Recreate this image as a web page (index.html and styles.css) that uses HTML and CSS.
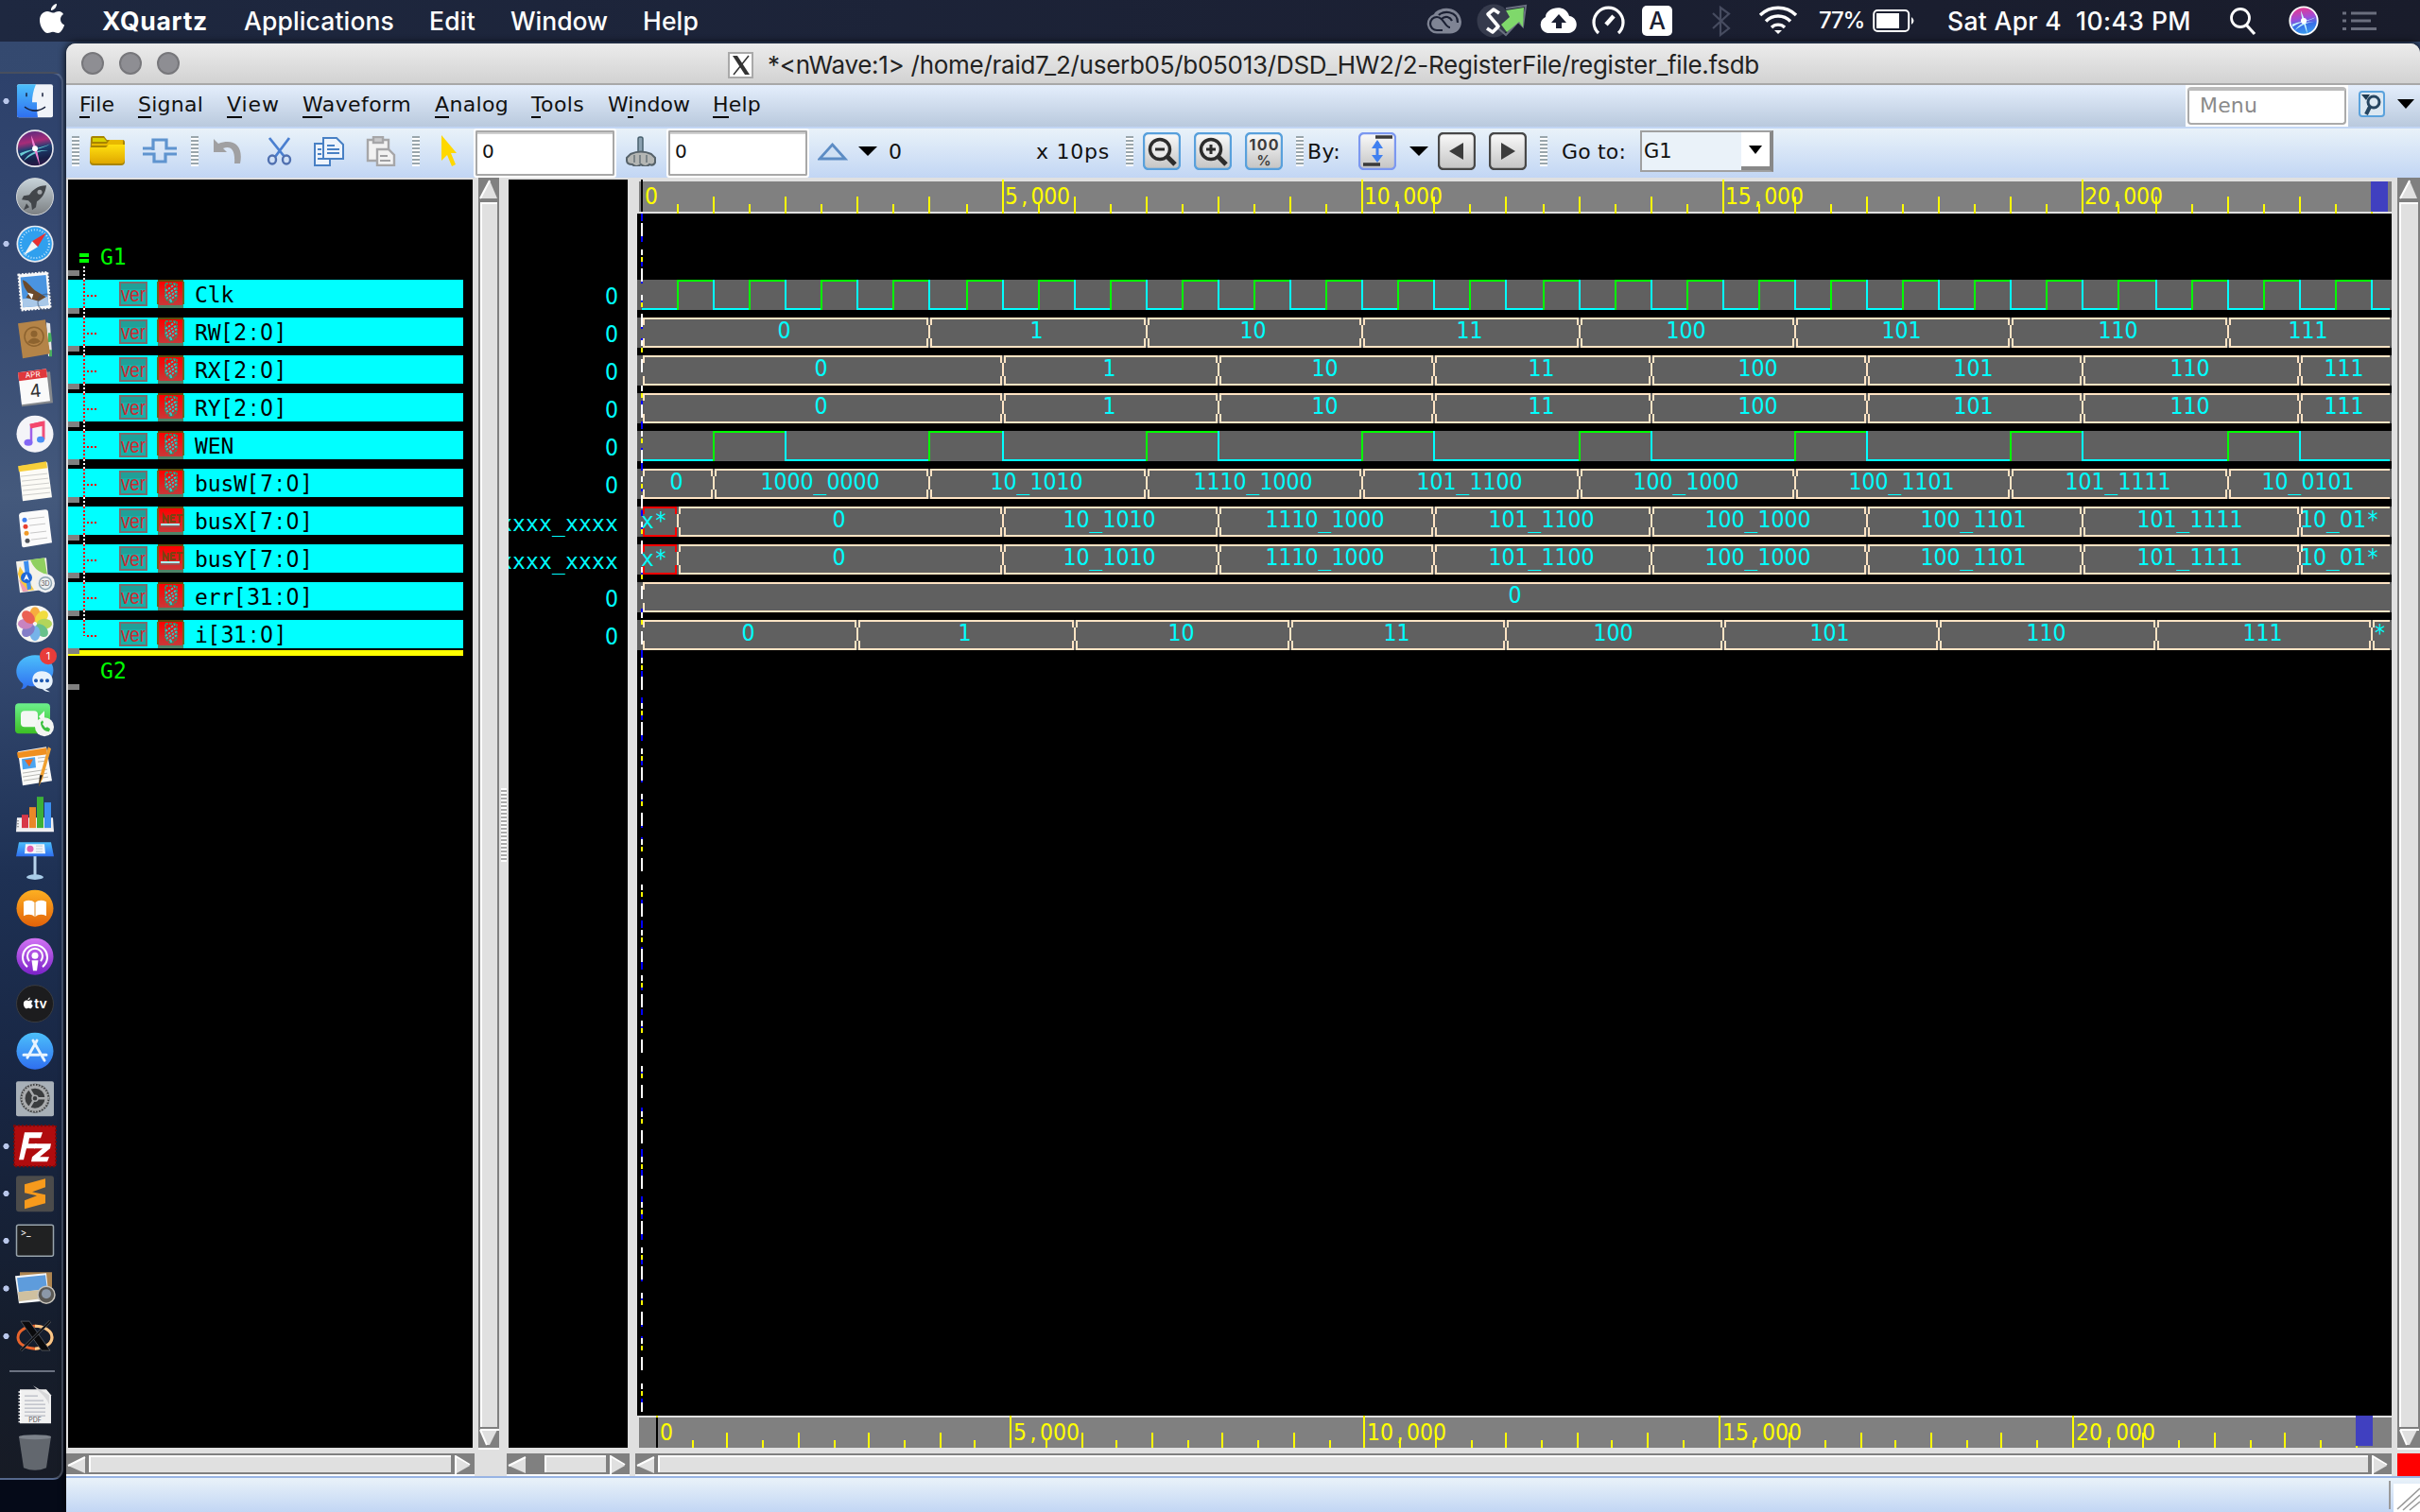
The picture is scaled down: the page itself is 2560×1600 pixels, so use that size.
FILE: index.html
```html
<!DOCTYPE html>
<html lang="en">
<head>
<meta charset="utf-8">
<title>nWave</title>
<link rel="stylesheet" href="styles.css">
</head>
<body>
<header class="menubar">
  <svg class="apple" width="28" height="34" viewBox="0 0 28 34"><path fill="#fff" d="M19 1c.3 3-2.700 7-6 7-.4-3.200 2.800-6.500 6-7zM26 12c-4.500 2.800-3.800 9.500 1.200 11.500-1.200 3.500-4 8.500-6.700 8.500-2.200 0-3-1.300-5.500-1.300S11.500 32 9.300 32C5.500 32 1 24.500 1 18.500 1 12.500 5 9 9 9c2.500 0 4.200 1.600 6 1.600 1.700 0 3.700-1.700 6.500-1.700 2 0 3.700 1.300 4.500 3.100z"/></svg>
  <b class="mb" data-w="112">XQuartz</b>
  <span class="mb mb-app" data-w="159">Applications</span>
  <span class="mb mb-edit" data-w="49">Edit</span>
  <span class="mb mb-win" data-w="103">Window</span>
  <span class="mb mb-help" data-w="59">Help</span>
  <div class="status">
    <svg width="40" height="44" viewBox="0 0 40 44"><path d="M12 35.500a10.500 10.500 0 0 1-3-20.500C12 7 36 4 38 23c0 7-5 12.500-12 12.500z" fill="#7f8494"/><g fill="none" stroke="#1b2033" stroke-width="2.200"><path d="M18 32h-6a7 7 0 0 1 0-14c4 0 6 3 8 6s4 5 6 5"/><path d="M14 16c4-5 20-5 20 8"/><path d="M17 20c4-4 9-2 11 2"/></g></svg>
    <svg class="sb-s" width="54" height="44" viewBox="0 0 54 44"><circle cx="18" cy="22" r="17.500" fill="#363b4d"/><path d="M31 9l21-3-3 22-5-5-13 14-8-7-4 3" fill="none" stroke="#6a7080" stroke-width="2"/><path d="M24 14l-6-4-6 5 11 13-6 6-6-4" fill="none" stroke="#fff" stroke-width="3.600" stroke-linejoin="round"/><path d="M31 11l19-3-1 21-4-6-13 11-6-8 9-8z" fill="#7fd86b"/></svg>
    <svg class="sb-c" width="42" height="44" viewBox="0 0 42 44"><path d="M9 35a9 9 0 0 1-2-17C7 8 28 3 32 17c10 1 11 17-1 18z" fill="#fff"/><path d="M21 15l8 9h-5v6h-6v-6h-5z" fill="#1b2033"/></svg>
    <svg class="sb-g" width="38" height="44" viewBox="0 0 38 44"><path d="M8 35a15.500 15.500 0 1 1 21 0" fill="none" stroke="#fff" stroke-width="3.200"/><path d="M16 26l8-9" stroke="#fff" stroke-width="4.500"/></svg>
    <span class="input-src">A</span>
    <svg class="sb-b" width="22" height="44" viewBox="0 0 22 44"><path d="M2 14l17 16-9 7V8l9 6.500L2 30" fill="none" stroke="#474c60" stroke-width="2.200"/></svg>
    <svg class="sb-w" width="42" height="44" viewBox="0 0 42 44"><g fill="none" stroke="#fff" stroke-width="3.400"><path d="M2 16a27 27 0 0 1 38 0M8 22.500a18 18 0 0 1 26 0M14 29a10 10 0 0 1 14 0"/></g><path d="M17 32h8l-4 4z" fill="#fff"/></svg>
    <span class="pct" data-w="48">77%</span>
    <svg class="sb-bat" width="46" height="44" viewBox="0 0 46 44"><rect x="1.200" y="11" width="37" height="22" rx="4" fill="none" stroke="#fff" stroke-width="2"/><rect x="4" y="14" width="24" height="16" fill="#fff"/><path d="M41 18q5 4 0 8z" fill="#fff"/></svg>
    <span class="date" data-w="121">Sat Apr 4</span>
    <span class="time" data-w="122">10:43 PM</span>
    <svg class="sb-f" width="30" height="44" viewBox="0 0 30 44"><circle cx="12" cy="19" r="9.500" fill="none" stroke="#fff" stroke-width="2.800"/><path d="M18 26l9 10" stroke="#fff" stroke-width="3.200"/></svg>
    <svg class="sb-siri" width="34" height="44" viewBox="0 0 44 50"><circle cx="22" cy="25" r="19" fill="url(#gSiriBar)" stroke="#fff" stroke-width="2.400"/><path d="M6 30c8-4 22-5 32-10C30 26 20 24 7 33zM18 11c4 8 8 20 9 32-4-12-8-20-9-32zM10 38c6-9 14-12 26-11-10 0-17 4-26 11z" fill="#c8fcff"/><circle cx="22" cy="25" r="4" fill="#fff"/></svg>
    <svg class="sb-l" width="38" height="44" viewBox="0 0 38 44"><path d="M0 14h4M0 22h4M0 30.500h4M9 14h27M9 22h21M9 30.500h27" stroke="#6b6f7e" stroke-width="3"/></svg>
  </div>
</header>

<svg class="defs" width="0" height="0">
  <defs>
    <linearGradient id="gBlue" x2="0" y2="1"><stop stop-color="#4cc0fb"/><stop offset="1" stop-color="#2f6ff0"/></linearGradient>
    <linearGradient id="gSiri" x1=".4" x2=".6" y2="1"><stop stop-color="#5a2a80"/><stop offset=".3" stop-color="#a82c78"/><stop offset=".5" stop-color="#1d3f72"/><stop offset=".8" stop-color="#182048"/><stop offset="1" stop-color="#301848"/></linearGradient>
    <linearGradient id="gSiriBar" x1=".4" x2=".6" y2="1"><stop stop-color="#e8388c"/><stop offset=".4" stop-color="#a04cd8"/><stop offset=".65" stop-color="#3870e8"/><stop offset="1" stop-color="#38a0f0"/></linearGradient>
    <linearGradient id="gGrey" x2="0" y2="1"><stop stop-color="#c8d4da"/><stop offset="1" stop-color="#7b7f82"/></linearGradient>
    <linearGradient id="gGreen" x2="0" y2="1"><stop stop-color="#6cf08c"/><stop offset="1" stop-color="#3cc024"/></linearGradient>
    <linearGradient id="gOrange" x2="0" y2="1"><stop stop-color="#fdb022"/><stop offset="1" stop-color="#e2620a"/></linearGradient>
    <linearGradient id="gPurple" x2="0" y2="1"><stop stop-color="#d273f4"/><stop offset="1" stop-color="#7a22c8"/></linearGradient>
    <linearGradient id="gRed" x2="0" y2="1"><stop stop-color="#ff0000"/><stop offset="1" stop-color="#c83838"/></linearGradient>
    <linearGradient id="gBtn" x2="0" y2="1"><stop stop-color="#fafafa"/><stop offset="1" stop-color="#c4c4c4"/></linearGradient>
    <linearGradient id="gGold" x2="0" y2="1"><stop stop-color="#ffe010"/><stop offset="1" stop-color="#e0a800"/></linearGradient>
    <g id="siri"><circle cx="22" cy="25" r="19" fill="url(#gSiri)" stroke="#e8e8ee" stroke-width="1.600"/><path d="M6 30c8-4 22-5 32-10C30 26 20 24 7 33zM10 38c6-9 14-12 26-11-10 0-17 4-26 11z" fill="#7ff4f0" opacity=".8"/><path d="M18 11c4 8 8 20 9 32-4-12-8-20-9-32z" fill="#f080d0"/><circle cx="22" cy="25" r="3" fill="#fff"/></g>
  </defs>
</svg>

<main class="desktop">
  <nav class="dock">
    <svg class="app run" viewBox="0 0 44 50"><rect x="3" y="7" width="38" height="35" rx="2" fill="#f0f3f9"/><path d="M3 9q0-2 2-2h18c-3 7-4 13-4 19h5c0 6 0 10 1 16H5q-2 0-2-2z" fill="url(#gBlue)"/><path d="M13 16v4M30 16v4M11 31q11 8 22 0" stroke="#17203c" stroke-width="1.500" fill="none"/></svg>
    <svg class="app" viewBox="0 0 44 50"><use href="#siri"/></svg>
    <svg class="app" viewBox="0 0 44 50"><circle cx="22" cy="25" r="19.500" fill="url(#gGrey)" stroke="#d5d9dc"/><path d="M34 13c-9 0-15 5-18 10l-6 1-2 4 7 1 3 3 1 7 4-3 1-6c6-4 9-9 10-17zM13 32l-3 7 6-3z" fill="#42464a"/><circle cx="27" cy="20" r="2.500" fill="#a0a4a8"/></svg>
    <svg class="app run" viewBox="0 0 44 50"><circle cx="22" cy="25" r="19.500" fill="#e8eaee"/><circle cx="22" cy="25" r="17.800" fill="#30a0ee"/><circle cx="22" cy="25" r="15" fill="none" stroke="#c0e4fa" stroke-width="2" stroke-dasharray="1 2"/><path d="M34 13L19 22l6 6z" fill="#e83030"/><path d="M10 37l9-15 6 6z" fill="#f4f4f4"/></svg>
    <svg class="app" viewBox="0 0 44 50"><g transform="rotate(-5 22 25)"><rect x="6" y="6" width="31" height="38" fill="#f8f8f8" stroke="#f8f8f8" stroke-width="2" stroke-dasharray="2 1.500"/><rect x="8" y="9" width="27" height="32" fill="#4a94e0"/><path d="M8 32h27v9H8z" fill="#a9c8e8"/><path d="M10 12c5 2 8 8 12 12l11 8-8 4-13-5 3-4c-3-5-5-9-5-15z" fill="#6b4a2c"/><path d="M14 26l6 2-2 5z" fill="#fff"/></g><circle cx="34" cy="37" r="9" fill="none" stroke="#3c4c66" stroke-width="1.500" opacity=".5"/></svg>
    <svg class="app" viewBox="0 0 44 50"><path d="M34 8l4 1 2 33-4 2z" fill="#e8e8e8"/><path d="M36 19l3 0 1 9-4 1zM37 37h3v7h-3z" fill="#48b060"/><path d="M4 9l29-4 5 36-29 5z" fill="#b48448"/><circle cx="21" cy="23" r="10" fill="none" stroke="#8d632f" stroke-width="1.500"/><circle cx="21" cy="20" r="3.500" fill="#8d632f"/><path d="M14 29q7-8 14-1-6 5-14 1z" fill="#8d632f"/></svg>
    <svg class="app" viewBox="0 0 44 50"><path d="M6 13l32-4 3 33-33 4z" fill="#85888c"/><path d="M4 10l30-4 4 34-30 4z" fill="#fafafa"/><path d="M4 10l30-4 1 9-30 4z" fill="#e0383c"/><g transform="rotate(-6 22 25)"><text x="21" y="15" font-size="8" class="ico" fill="#fff">APR</text><text x="22" y="36" font-size="19" class="ico" fill="#333">4</text></g></svg>
    <svg class="app" viewBox="0 0 44 50"><circle cx="22" cy="25" r="19.500" fill="#f4f4f8"/><path d="M17 16l14-3v18" fill="none" stroke="#f0507a" stroke-width="3"/><path d="M18 15v19" stroke="#a060e8" stroke-width="2.500"/><path d="M17 17l14-3" stroke="#f4486c" stroke-width="5"/><ellipse cx="15" cy="34" rx="4.500" ry="3.500" fill="#8468f4"/><ellipse cx="28" cy="31" rx="4" ry="3.300" fill="#4a90f4"/></svg>
    <svg class="app" viewBox="0 0 44 50"><path d="M5 9l30-4 5 37-31 4z" fill="#fcfbf6"/><path d="M4 9l30-5 1 7-30 4z" fill="#f7cf3a"/><path d="M7 20l28-3M8 25l28-3M8 30l29-3M9 35l29-3M9 40l29-3" stroke="#cfcfcc"/></svg>
    <svg class="app" viewBox="0 0 44 50"><path d="M8 8l25-3q3 0 3 3l4 32-30 5q-2 0-2-3L5 11q0-2 3-3z" fill="#fbfbfb"/><g stroke="#c8c8c8"><path d="M15 15l17-2M16 22l17-2M17 30l17-2M18 37l17-2"/></g><circle cx="11" cy="16" r="2.500" fill="#4080f0"/><circle cx="12" cy="23" r="2.500" fill="#e84030"/><circle cx="13" cy="30" r="2.500" fill="#f09a28"/><circle cx="14" cy="38" r="2.500" fill="#50545c"/></svg>
    <svg class="app" viewBox="0 0 44 50"><path d="M2 9l32-4 3 33-31 4z" fill="#f4f2ea"/><path d="M17 7l15-2 3 18c-10-3-15-8-18-16z" fill="#90d060"/><path d="M4 22l6 18 11-1L6 14z" fill="#f7c83a"/><path d="M5 28l4 13 6-1z" fill="#f09ab0"/><path d="M10 9l5-1 3 30-4 1z" fill="#3c8ef0"/><circle cx="13" cy="26" r="6" fill="#1e68d8"/><path d="M13 22l3 7-3-2-3 2z" fill="#fff"/><circle cx="33" cy="32" r="10" fill="#eef0f2"/><circle cx="33" cy="32" r="6.500" fill="none" stroke="#8ba2b0" stroke-width="1.500"/><text x="33" y="35" font-size="7" class="ico" fill="#555">3D</text></svg>
    <svg class="app" viewBox="0 0 44 50"><circle cx="22" cy="25" r="19.500" fill="#f6f6f2"/><g opacity=".85"><ellipse cx="22" cy="15" rx="5.500" ry="8" fill="#f8a020"/><ellipse cx="22" cy="15" rx="5.500" ry="8" fill="#f0d820" transform="rotate(45 22 25)"/><ellipse cx="22" cy="15" rx="5.500" ry="8" fill="#a8d040" transform="rotate(90 22 25)"/><ellipse cx="22" cy="15" rx="5.500" ry="8" fill="#50b878" transform="rotate(135 22 25)"/><ellipse cx="22" cy="15" rx="5.500" ry="8" fill="#60a8e8" transform="rotate(180 22 25)"/><ellipse cx="22" cy="15" rx="5.500" ry="8" fill="#7068c0" transform="rotate(225 22 25)"/><ellipse cx="22" cy="15" rx="5.500" ry="8" fill="#c070b8" transform="rotate(270 22 25)"/><ellipse cx="22" cy="15" rx="5.500" ry="8" fill="#e84838" transform="rotate(315 22 25)"/></g></svg>
    <svg class="app" viewBox="0 0 44 50"><path d="M22 8c26 0 26 32 0 33-4 0-6 0-8-1-2 3-4 4-7 4 2-2 3-4 2-6C-4 28 3 8 22 8z" fill="url(#gBlue)"/><path d="M29 25c15 0 15 18 4 19l5 3c-4 0-6-1-8-3-14-1-14-19-1-19z" fill="#e8f2fc"/><g fill="#1e58b0"><circle cx="23" cy="35" r="2"/><circle cx="29" cy="35" r="2"/><circle cx="35" cy="35" r="2"/></g><circle cx="36" cy="9" r="9" fill="#e83c3a"/><text x="36" y="13" font-size="11" class="ico" fill="#fff">1</text></svg>
    <svg class="app" viewBox="0 0 44 50"><rect x="1" y="9" width="37" height="32" rx="4" fill="url(#gGreen)"/><rect x="7" y="17" width="18" height="17" rx="4" fill="#f4f8f4"/><path d="M26 23l6-6v13z" fill="#f4f8f4"/><circle cx="32" cy="34" r="10" fill="#f2f4f2"/><path d="M28 29c0 6 4 10 9 10l1-3-3-2-2 1-3-4 1-2-1-2z" fill="#3cc040"/></svg>
    <svg class="app" viewBox="0 0 44 50"><path d="M4 9l30-5 6 36-31 5z" fill="#fafaf8"/><path d="M3 10l31-5 1 7-31 4z" fill="#f09020"/><path d="M8 17l14-2 1 11-14 2z" fill="#4aa4f0"/><path d="M11 18l9-1-4 8z" fill="#e86820"/><g stroke="#b8b8b4"><path d="M25 16l9-1M25 20l9-1M9 32l26-4M9 36l26-4M10 40l26-4"/></g><path d="M36 4l3 2-9 32-4 8 1-10z" fill="#f0a030"/><path d="M30 34l-4 12 1-12z" fill="#222"/></svg>
    <svg class="app" viewBox="0 0 44 50"><path d="M3 29h38l1 15H2z" fill="#f0f0f2"/><path d="M4 32v9" stroke="#888" stroke-width="2" stroke-dasharray="1 2"/><rect x="8" y="26" width="7" height="14" fill="#d83848"/><rect x="16" y="18" width="7" height="22" fill="#e88828"/><rect x="24" y="7" width="7" height="33" fill="#3cb038"/><rect x="32" y="13" width="7" height="27" fill="#3c90f0"/></svg>
    <svg class="app" viewBox="0 0 44 50"><path d="M5 5h34l3 15H2z" fill="url(#gBlue)"/><path d="M12 7h20l1 10H11z" fill="#f2f6fa"/><circle cx="17" cy="12" r="3.500" fill="#e060b0"/><path d="M23 9h7M23 12h7M23 15h7" stroke="#c0c8d0"/><rect x="20.500" y="20" width="3" height="21" fill="#b8d4ec"/><ellipse cx="22" cy="42" rx="9" ry="2.800" fill="#a8cce8"/></svg>
    <svg class="app" viewBox="0 0 44 50"><circle cx="22" cy="25" r="19.500" fill="url(#gOrange)"/><path d="M10 18q7-3 12 1 5-4 12-1v15q-7-3-12 1-5-4-12-1z" fill="#fff"/><path d="M22 19v15" stroke="#e08a20"/></svg>
    <svg class="app" viewBox="0 0 44 50"><circle cx="22" cy="25" r="19.500" fill="url(#gPurple)"/><g fill="none" stroke="#fff" stroke-width="2"><path d="M14 36a13 13 0 1 1 16 0M16 30a8 8 0 1 1 12 0"/></g><circle cx="22" cy="24" r="3.500" fill="#fff"/><path d="M18.500 29h7l-1.500 11h-4z" fill="#fff"/></svg>
    <svg class="app" viewBox="0 0 44 50"><circle cx="22" cy="25" r="19.500" fill="#1c1c1e" stroke="#3a3c40"/><path transform="translate(9.500 18) scale(.38)" fill="#fff" d="M19 1c.3 3-2.700 7-6 7-.4-3.200 2.800-6.500 6-7zM26 12c-4.500 2.800-3.800 9.500 1.200 11.500-1.200 3.500-4 8.500-6.700 8.500-2.200 0-3-1.300-5.500-1.300S11.500 32 9.300 32C5.500 32 1 24.500 1 18.500 1 12.500 5 9 9 9c2.500 0 4.200 1.600 6 1.600 1.700 0 3.700-1.700 6.500-1.700 2 0 3.700 1.300 4.500 3.100z"/><text x="28" y="30" font-size="14" font-weight="600" class="ico" fill="#fff">tv</text></svg>
    <svg class="app" viewBox="0 0 44 50"><circle cx="22" cy="25" r="19.500" fill="url(#gBlue)"/><g stroke="#e8f4fe" stroke-width="3" stroke-linecap="round"><path d="M24 14L14 32M20 14l12 21M10 29h16M30 29h4"/></g></svg>
    <svg class="app" viewBox="0 0 44 50"><rect x="2" y="7" width="40" height="37" rx="2" fill="#a8b0b8"/><circle cx="22" cy="25" r="15.500" fill="#3a3c3e"/><circle cx="22" cy="25" r="12" fill="none" stroke="#a8aaac" stroke-width="3"/><circle cx="22" cy="25" r="14.200" fill="none" stroke="#a8aaac" stroke-width="2" stroke-dasharray="1.500 1.500"/><path d="M22 25h12M22 25l-6-10M22 25l-6 10" stroke="#a8aaac" stroke-width="2.500"/><circle cx="22" cy="25" r="3" fill="#3a3c3e" stroke="#a8aaac" stroke-width="1.500"/></svg>
    <svg class="app run" viewBox="0 0 44 50"><rect x="0" y="3" width="44" height="43" fill="#b00c0e" stroke="#7d0808" stroke-width="2" stroke-dasharray="2 2"/><path d="M11 10h19l-2 6H16l-1 6h9l-2 5h-9l-3 12H5z" fill="#fff"/><path d="M22 22h17l-1 5-11 9h10l-2 5H18l1-5 11-9h-9z" fill="#fff"/></svg>
    <svg class="app run" viewBox="0 0 44 50"><rect x="2" y="6" width="40" height="38" rx="3" fill="#4b4b4b"/><path d="M11 15l22-6v9l-14 5 14 3v9l-22 6v-9l13-5-13-3z" fill="#f79a1c"/></svg>
    <svg class="app run" viewBox="0 0 44 50"><rect x="2.500" y="8" width="39" height="33" rx="2" fill="#202122" stroke="#98a4ac" stroke-width="1.500"/><text x="12" y="20" font-size="10" class="ico" fill="#fff">&gt;_</text></svg>
    <svg class="app run" viewBox="0 0 44 50"><path d="M6 8h34v22H6z" fill="#ae8550"/><path d="M1 12l33-3 3 29-32 3z" fill="#f4f6f8"/><path d="M3 14l30-3 2 15-30 3z" fill="#5e9cdc"/><path d="M4 29l31-3 1 9-31 4z" fill="#cfc0a0"/><circle cx="34" cy="32" r="9" fill="#5a5854" stroke="#c8c4bc" stroke-width="1.500"/><circle cx="34" cy="31" r="5" fill="#8c98a8"/></svg>
    <svg class="app run" viewBox="0 0 44 50"><ellipse cx="22" cy="26" rx="18" ry="12" fill="none" stroke="#e8642c" stroke-width="3"/><path d="M22 14a18 12 0 0 1 0 24" fill="none" stroke="#f8c888" stroke-width="3"/><path d="M7 9h9l22 31h-9z" fill="#0a0a0c" stroke="#5a5e66" stroke-width=".8"/><path d="M38 9L7 40" stroke="#6a6e76" stroke-width="2.800"/><path d="M38 9L7 40" stroke="#0a0a0c" stroke-width="1.600"/></svg>
    <i class="dock-rule"></i>
    <svg class="app" viewBox="0 0 44 50"><path d="M6 8h28l5 6v30H6z" fill="#f0f0f0"/><path d="M20 4l17 10v10C34 16 28 12 20 4z" fill="#d8d8da"/><path d="M6 10v34" stroke="#fff" stroke-width="3" stroke-dasharray="1.500 2"/><path d="M11 15h14M11 20h20M11 24h22M11 28h22M11 32h22M11 36h22" stroke="#a8acb8"/><text x="22" y="43" font-size="7" class="ico" fill="#555">PDF</text></svg>
    <svg class="app" viewBox="0 0 44 50"><path d="M5 8h34l-5 33q-12 5-24 0z" fill="#62676e"/><ellipse cx="22" cy="8.500" rx="17" ry="2.500" fill="#7d838b"/></svg>
  </nav>

  <section class="window">
    <div class="titlebar">
      <i class="light"></i><i class="light"></i><i class="light"></i>
      <svg class="xicon" width="28" height="30" viewBox="0 0 28 30"><rect x="1" y="2" width="25" height="26" fill="#fff" stroke="#a9a9a9" stroke-width="2"/><path d="M5 5h5l13 20h-5z" fill="#333"/><path d="M22 5L6 25" stroke="#333" stroke-width="1.500"/></svg>
      <span class="title" data-w="1049">*&lt;nWave:1&gt; /home/raid7_2/userb05/b05013/DSD_HW2/2-RegisterFile/register_file.fsdb</span>
    </div>
    <div class="menus">
      <span data-w="37"><u>F</u>ile</span><span data-w="69"><u>S</u>ignal</span><span data-w="56"><u>V</u>iew</span><span data-w="115"><u>W</u>aveform</span><span data-w="78"><u>A</u>nalog</span><span data-w="56"><u>T</u>ools</span><span data-w="87">W<u>i</u>ndow</span><span data-w="51"><u>H</u>elp</span>
      <div class="menu-search"><i></i><b data-w="61">Menu</b></div>
      <svg class="search-icon" width="28" height="28" viewBox="0 0 28 28"><rect x="1" y="1" width="26" height="26" rx="3" fill="#dce8f2" stroke="#5aa2dc" stroke-width="2"/><path d="M3 4h9l-4 6z" fill="#1e3a50"/><circle cx="16" cy="12" r="6" fill="none" stroke="#264560" stroke-width="3"/><path d="M12 17l-4 8" stroke="#264560" stroke-width="4"/></svg>
      <svg class="search-icon" width="18" height="10" viewBox="0 0 18 10"><path d="M0 0h18L9 10z"/></svg>
    </div>
    <div class="toolbar">
      <i class="grip"></i>
      <svg class="t1" width="40" height="32" viewBox="0 0 40 32"><path d="M2 2q0-2 2-2h12l3 4h17q2 0 2 3v20q0 4-4 4H5q-4 0-4-4z" fill="#a88400"/><path d="M4 2h12l3 4H4z" fill="#d8d000"/><path d="M3 8h16l3-4h14v6H3z" fill="#e8b800"/><path d="M1 12h17l3-3h17v15q0 5-4 5H6q-5 0-5-5z" fill="url(#gGold)"/></svg>
      <svg class="t2" width="36" height="28" viewBox="0 0 36 28"><path d="M0 11h8M28 11h8M11 11h-3M11 13V2h14v9h4M0 17h12v8h12v-8h12" fill="none" stroke="#5f94cf" stroke-width="3.200"/></svg>
      <i class="grip t3"></i>
      <svg class="t4" width="32" height="28" viewBox="0 0 32 28"><path d="M1 1v14h14l-4-4c8-3 13 1 12 16h6C33 8 22 0 6 6z" fill="#a0a0a2"/></svg>
      <svg class="t5" width="28" height="30" viewBox="0 0 28 30"><path d="M3 1l16 20M24 1L9 21" stroke="#4a7fd0" stroke-width="2.800"/><ellipse cx="6" cy="24" rx="4" ry="4.500" fill="none" stroke="#5070b0" stroke-width="2.400"/><ellipse cx="21" cy="24" rx="4" ry="4.500" fill="none" stroke="#5070b0" stroke-width="2.400"/></svg>
      <svg class="t6" width="32" height="32" viewBox="0 0 32 32"><g fill="#eef4fc" stroke="#4880c4" stroke-width="2"><path d="M1 8h16v23H1z"/><path d="M10 2h14l7 7v15H10z"/></g><path d="M14 10h8M14 14h13M14 18h13M4 14h4M4 19h4M4 24h8" stroke="#4880c4" stroke-width="2"/></svg>
      <svg class="t7" width="32" height="32" viewBox="0 0 32 32"><g fill="#f2f2f2" stroke="#a6a6a8" stroke-width="2.400"><path d="M2 4h22v22H2z"/><rect x="8" y="1" width="10" height="6" fill="#c8c8ca"/><path d="M12 14h12l6 6v11H12z"/></g><path d="M15 21h8M15 26h11" stroke="#a0a0a2" stroke-width="2"/></svg>
      <i class="grip t8"></i>
      <svg class="t9" width="20" height="34" viewBox="0 0 20 34"><path d="M2 0l16 19h-6l5 12-4 2-5-12-6 6z" fill="#ffd800"/></svg>
      <div class="field">0</div>
      <svg class="t10" width="32" height="32" viewBox="0 0 32 32"><rect x="13" y="1" width="5" height="17" rx="2" fill="#8aa0b0" stroke="#48606e" stroke-width="1.500"/><path d="M5 19q11-5 22 0l4 4v5q-2 4-6 2-4 4-9 0-5 4-9 0-6 0-6-4v-3z" fill="#b4b6b4" stroke="#56626a" stroke-width="2"/><path d="M9 20v8M15 20v9M22 20v8" stroke="#7c8488" stroke-width="2"/></svg>
      <div class="field f2">0</div>
      <svg class="t11" width="32" height="20" viewBox="0 0 32 20"><path d="M15.500 3L29 18H2z" fill="#cfe0f4" stroke="#5c8cc4" stroke-width="2.800"/></svg>
      <svg class="t12" width="20" height="10" viewBox="0 0 20 10"><path d="M0 0h20L10 10z"/></svg>
      <span class="t13">0</span>
      <span class="t14" data-w="78">x 10ps</span>
      <i class="grip t15"></i>
      <svg class="t16" width="40" height="40" viewBox="0 0 40 40"><rect x="1" y="1" width="38" height="38" rx="5" fill="url(#gBtn)" stroke="#58a0dc" stroke-width="2.400"/><circle cx="18" cy="18" r="10.500" fill="#e8e8e8" stroke="#2c2c2c" stroke-width="3.500"/><path d="M26 26l8 8" stroke="#2c2c2c" stroke-width="5"/><path d="M13 18h10" stroke="#2c2c2c" stroke-width="3"/></svg>
      <svg class="t17" width="40" height="40" viewBox="0 0 40 40"><rect x="1" y="1" width="38" height="38" rx="5" fill="url(#gBtn)" stroke="#58a0dc" stroke-width="2.400"/><circle cx="18" cy="18" r="10.500" fill="#e8e8e8" stroke="#2c2c2c" stroke-width="3.500"/><path d="M26 26l8 8" stroke="#2c2c2c" stroke-width="5"/><path d="M13 18h10M18 13v10" stroke="#2c2c2c" stroke-width="3"/></svg>
      <svg class="t17" width="40" height="40" viewBox="0 0 40 40"><rect x="1" y="1" width="38" height="38" rx="5" fill="url(#gBtn)" stroke="#58a0dc" stroke-width="2.400"/><text x="20" y="19" font-size="16" textLength="31" class="ico" font-weight="700" fill="#3c3c3c">100</text><text x="20" y="35" font-size="15" font-weight="600" class="ico" fill="#3c3c3c">%</text></svg>
      <i class="grip t17"></i>
      <span class="t18" data-w="35">By:</span>
      <svg class="t19" width="40" height="40" viewBox="0 0 40 40"><rect x="1" y="1" width="38" height="38" rx="5" fill="url(#gBtn)" stroke="#7c98f0" stroke-width="2.400"/><path d="M18 5h18M5 34h18" stroke="#3a3a3a" stroke-width="3.500"/><path d="M20 10v20" stroke="#4080f0" stroke-width="3"/><path d="M20 8l6 9H14zM20 32l6-8H14z" fill="#4080f0"/></svg>
      <svg class="t12 t20" width="20" height="10" viewBox="0 0 20 10"><path d="M0 0h20L10 10z"/></svg>
      <svg class="t21" width="40" height="40" viewBox="0 0 40 40"><rect x="1" y="1" width="38" height="38" rx="5" fill="url(#gBtn)" stroke="#484848" stroke-width="2.400"/><path d="M27 11v18L12 20z" fill="#3c3c3c"/></svg>
      <svg class="t22" width="40" height="40" viewBox="0 0 40 40"><rect x="1" y="1" width="38" height="38" rx="5" fill="url(#gBtn)" stroke="#484848" stroke-width="2.400"/><path d="M13 11v18l15-9z" fill="#3c3c3c"/></svg>
      <i class="grip t22"></i>
      <span class="t23" data-w="68">Go to:</span>
      <div class="combo"><span>G1</span><i><svg width="14" height="9" viewBox="0 0 14 9"><path d="M0 0h14L7 9z"/></svg></i></div>
    </div>

    <div class="panes">
      <div class="names" id="names"></div>
      <div class="vbar"><svg class="up" width="22" height="26" viewBox="0 0 22 26"><path d="M12 3l8 19H2z" fill="#e0e0e0"/><path d="M12 3L2 22" stroke="#fff" stroke-width="2"/></svg><i></i><svg class="dn" width="22" height="20" viewBox="0 0 22 20"><path d="M2 1h18l-8 16h-3z" fill="#e0e0e0"/><path d="M2 1h20M2 1l7 16" stroke="#fff" stroke-width="2"/></svg></div>
      <div class="split"></div>
      <div class="values" id="values"></div>
      <svg id="wave" class="wave" width="1856" height="1342" viewBox="674 190 1856 1342"></svg>
      <div class="vbar right"><svg class="up" width="24" height="26" viewBox="0 0 22 26"><path d="M12 3l8 19H2z" fill="#e0e0e0"/><path d="M12 3L2 22" stroke="#fff" stroke-width="2"/></svg><i></i><svg class="dn" width="24" height="20" viewBox="0 0 22 20"><path d="M2 1h18l-8 16h-3z" fill="#e0e0e0"/><path d="M2 1h20M2 1l7 16" stroke="#fff" stroke-width="2"/></svg></div>

      <div class="hbar h1"><svg width="24" height="22" viewBox="0 0 24 22"><path d="M20 2v17L2 11z" fill="#e0e0e0"/><path d="M20 2L2 11" stroke="#fff" stroke-width="2"/></svg><i></i><svg width="22" height="22" viewBox="0 0 22 22"><path d="M3 2v17l14-8z" fill="#e0e0e0"/><path d="M2 20V1l15 9" fill="none" stroke="#fff" stroke-width="2"/></svg></div>
      <div class="hbar h2"><svg width="40" height="22" viewBox="0 0 40 22"><path d="M20 2v17L2 11z" fill="#e0e0e0"/><path d="M20 2L2 11" stroke="#fff" stroke-width="2"/></svg><i></i><svg width="22" height="22" viewBox="0 0 22 22"><path d="M3 2v17l14-8z" fill="#e0e0e0"/><path d="M2 20V1l15 9" fill="none" stroke="#fff" stroke-width="2"/></svg></div>
      <div class="hbar h3"><svg width="24" height="22" viewBox="0 0 24 22"><path d="M20 2v17L2 11z" fill="#e0e0e0"/><path d="M20 2L2 11" stroke="#fff" stroke-width="2"/></svg><i></i><svg width="22" height="22" viewBox="0 0 22 22"><path d="M3 2v17l14-8z" fill="#e0e0e0"/><path d="M2 20V1l15 9" fill="none" stroke="#fff" stroke-width="2"/></svg></div>
      <div class="alarm"></div>
    </div>
    <div class="footer"><svg width="34" height="34" viewBox="0 0 34 34"><path d="M2 0v30" stroke="#9a9a9a" stroke-width="2"/><path d="M6 3h28v31H6z" fill="#fff"/><path d="M10 30L34 8M16 31L34 15M23 31l11-9" stroke="#9a9a9a" stroke-width="1.600"/></svg></div>
  </section>
</main>
<script src="app.js"></script>
</body>
</html>
```
FILE: styles.css
```css
* { box-sizing: border-box; }
body { margin: 0; width: 2560px; height: 1600px; overflow: hidden; background: #050a18; font-family: "DejaVu Sans", sans-serif; }
svg { display: block; flex: none; }
.defs { position: absolute; }
.ico { font-family: Inter, sans-serif; text-anchor: middle; }

.menubar { height: 44px; display: flex; align-items: center; background: linear-gradient(90deg, #1e2840, #1b2033 60%, #191c2b); color: #fff; font: 500 26.500px/44px Inter, sans-serif; white-space: nowrap; }
.menubar .apple { margin: 0 0 4px 41px; }
.mb { margin-left: 39px; }
.mb-app { margin-left: 38px; }
.mb-edit { margin-left: 37px; }
.mb-win { margin-left: 37px; }
.mb-help { margin-left: 37px; }
[data-w] { white-space: pre; }
.status { margin-left: auto; display: flex; align-items: center; width: 1052px; }
.sb-s { margin-left: 14px; }
.sb-c { margin-left: 12px; }
.sb-g { margin-left: 13px; }
.input-src { margin-left: 16px; width: 32px; height: 32px; border-radius: 5px; background: #fff; color: #1b2033; font-size: 25px; line-height: 33px; text-align: center; }
.sb-b { margin-left: 41px; }
.sb-w { margin-left: 28px; }
.pct { margin-left: 22px; font-size: 24px; }
.sb-bat { margin-left: 9px; }
.date { margin-left: 33px; }
.time { margin-left: 15px; }
.sb-f { margin-left: 40px; }
.sb-siri { margin-left: 32px; }
.sb-l { margin-left: 24px; }

.desktop { display: flex; height: 1556px; background: linear-gradient(#34496f, #3a5075 30%, #16233f 55%, #050a18 97%); }
.dock { width: 67px; height: 1490px; margin: 32px 3px 0 0; padding: 4px 0 0 15px; border: 2px solid rgba(160,175,200,.35); border-left: 0; border-radius: 0 11px 11px 0; background: linear-gradient(#2d416b, #364a72 16%, #44597c 30%, #33486f 42%, #1e3154 57%, #182643 72%, #151d2c 90%, #171b25); }
.app { width: 44px; height: 50.250px; overflow: visible; }
.run { background: radial-gradient(circle at 3.500px 50%, #b8c6ea 0 2.800px, transparent 3.400px); width: 59px; margin-left: -12px; padding-left: 12px; padding-right: 3px; }
.dock-rule { display: block; width: 48px; height: 2px; margin: 11px 0 10px -5px; background: #6a7180; }

.window { width: 2490px; margin-top: 2px; height: 1554px; border-radius: 10px 10px 0 0; background: #e0e0e0; overflow: hidden; box-shadow: 0 0 8px #000; }
.titlebar { height: 44px; display: flex; align-items: center; padding-left: 16px; background: linear-gradient(#ececec, #d2d2d2); border-bottom: 2px solid #a8a8a8; font: 26px/42px Inter, sans-serif; color: #222; }
.light { width: 24px; height: 24px; border-radius: 50%; background: #8e8e93; border: 2px solid #77777b; margin-right: 16px; }
.xicon { margin: 3px 0 0 564px; }
.title { margin: 3px 0 0 14px; }
.menus { height: 46px; display: grid; grid-template: 44px / 62px 94px 80px 140px 102px 81px 111px 1553px 187px 41px 18px; align-items: center; padding-left: 14px; background: linear-gradient(#e4eefc, #b9c9dd); border-bottom: 2px solid #c2d6f4; font-size: 22px; line-height: 40px; color: #111; }
.menus > span { padding-bottom: 3px; }
.menus u { text-decoration: none; background: linear-gradient(#000, #000) 0 100%/100% 2px no-repeat; padding-bottom: 2px; }
.menu-search { height: 44px; width: 172px; margin-left: 5px; padding: 2px; background: #fff; }
.menu-search i { display: block; height: 40px; border: 2px solid #aaa; border-top: 4px solid #bbb; border-radius: 4px; margin-bottom: -40px; }
.menu-search b { font-weight: 400; color: #8a8a8a; padding-left: 13px; line-height: 38px; display: inline-block; }
.search-icon { margin: 0 0 4px 1px; }
.toolbar { height: 52px; display: flex; align-items: center; padding: 0 0 4px 6px; background: linear-gradient(#e9f2f9, #c2d6f4); font-size: 22px; color: #111; }
.grip { width: 8px; height: 32px; flex: none; background: repeating-linear-gradient(#9aa6ac 0 2px, #fff 2px 4px); }
.t1 { margin-left: 10px; } .t2 { margin-left: 17px; } .t3 { margin-left: 15px; } .t4 { margin-left: 15px; }
.t5 { margin-left: 25px; } .t6 { margin-left: 22px; } .t7 { margin-left: 23px; } .t8 { margin-left: 17px; }
.t9 { margin-left: 21px; } .t10 { margin-left: 10px; } .t11 { margin-left: 9px; } .t12 { margin-left: 11px; }
.t13 { margin-left: 12px; width: 14px; } .t14 { margin-left: 142px; } .t15 { margin-left: 17px; } .t16 { margin-left: 10px; }
.t17 { margin-left: 14px; } .t18 { margin-left: 4px; } .t19 { margin-left: 19px; } .t20 { margin-left: 14px; }
.t21 { margin-left: 10px; } .t22 { margin-left: 14px; } .t23 { margin-left: 15px; }
.field { flex: none; width: 151px; height: 52px; margin: 4px 0 0 16px; padding-left: 7px; background: #fff; border: 2px solid #fff; box-shadow: inset 0 0 0 2px #a8a8a8, inset 0 4px 0 #d0d0d0; border-radius: 3px; font-size: 20px; line-height: 44px; }
.f2 { margin-left: 11px; }
.combo { display: flex; width: 141px; height: 44px; margin-left: 15px; border: 2px solid #a0a0a0; border-right: 4px solid #888; background: #eaf2f9; line-height: 40px; }
.combo span { width: 105px; padding-left: 2px; font-size: 21px; }
.combo i { flex: 1; display: flex; align-items: center; justify-content: center; background: #fff; border-bottom: 4px solid #888; }

.panes { display: grid; grid-template-columns: 436px 22px 10px 126px 10px 1856px 6px 24px; grid-template-rows: 1344px 6px 24px; background: #e0e0e0; }
.names { margin: 2px 6px 0 2px; background: #000; overflow: hidden; }
.group { height: 106px; }
.row { height: 40px; display: flex; align-items: flex-start; }
.row .bar { width: 418px; height: 30px; background: #0ff; display: flex; }
.bar svg { overflow: visible; }
.tail { margin-top: -10px; }
.cells { font-family: "DejaVu Sans Condensed", "DejaVu Sans", sans-serif; font-stretch: condensed; font-size: 24.500px; text-anchor: middle; }
.cells .m { font-family: "DejaVu Sans Mono", monospace; font-stretch: normal; font-size: 23px; }
.ver { font-family: "Liberation Sans", sans-serif; font-size: 22px; }
.vbar { display: flex; flex-direction: column; background: #808080; height: 1346px; border-bottom: 2px solid #fff; }
.vbar i { flex: 1; margin: 0 2px; background: #e0e0e0; border: solid #fff; border-width: 2px 0 0 2px; margin-bottom: 2px; }
.right { grid-column: 8; }
.split { background: linear-gradient(#e0e0e0, #e0e0e0) 0 0/100% 646px no-repeat, linear-gradient(#e0e0e0, #e0e0e0) 0 100%/100% 620px no-repeat, linear-gradient(90deg, #e0e0e0 2px, transparent 2px 8px, #e0e0e0 8px), repeating-linear-gradient(#aaa 0 2px, #fff 2px 4px); }
.values { margin-top: 2px; background: #000; overflow: hidden; padding-top: 106px; }
.wave { margin-top: 2px; grid-column: 6; background: #000; overflow: hidden; }
.hbar { grid-row: 3; display: flex; height: 24px; background: #808080; border-top: 2px solid #808080; border-bottom: 2px solid #fff; }
.hbar i { flex: 1; height: 18px; background: #e0e0e0; border: solid #fff; border-width: 2px 0 0 2px; margin-right: 3px; }
.hbar svg { height: 22px; }
.h1 { grid-column: 1; width: 432px; }
.h2 { grid-column: 4; width: 130px; margin-left: -2px; }
.h3 { grid-column: 6; width: 1858px; margin-left: -2px; }
.alarm { grid-row: 3; grid-column: 8; background: #f00; }
.footer { height: 38px; display: flex; justify-content: flex-end; padding-top: 3px; border-top: 2px solid #98b4e4; background: linear-gradient(#e9f2f9, #c2d6f4); }
```
FILE: app.js
```js
// Text on the fixed 14px character grid used by the viewer panes
const CELL = 14;
const esc = c => ({ '<': '&lt;', '&': '&amp;' }[c] || c);
function cells(s, x, y, fill, pitch = CELL) {
  const xs = [...s].map((c, i) => (x + i * pitch + pitch / 2).toFixed(1)).join(' ');
  const body = s.replace(/[A-Za-z_]+|[^A-Za-z_]+/g, r =>
    /[A-Za-z_]/.test(r) ? `<tspan class="m">${r}</tspan>` : [...r].map(esc).join(''));
  return `<text class="cells" x="${xs}" y="${y}" fill="${fill}">${body}</text>`;
}
const rect = (x, y, w, h, f) => `<rect x="${x}" y="${y}" width="${w}" height="${h}" fill="${f}"/>`;

const X = t => 678 + 2 * Math.floor(t * 0.03812 + 0.5) + 1;
const every3 = s => Array.from({ length: 7 }, (_, i) => s + i * 3000);
const words = ['10_1010', '1110_1000', '101_1100', '100_1000', '100_1101', '101_1111'];
const bin = ['0', '1', '10', '11', '100', '101', '110', '111'];
const signals = [
  { name: 'Clk', bit: Array.from({ length: 48 }, (_, i) => 500 * (i + 1)) },
  { name: 'RW[2:0]', at: every3(4000), v: bin },
  { name: 'RX[2:0]', at: every3(5000), v: bin },
  { name: 'RY[2:0]', at: every3(5000), v: bin },
  { name: 'WEN', bit: [1000, ...every3(4000)].flatMap(t => [t, t + 1000]) },
  { name: 'busW[7:0]', at: [1000, ...every3(4000)], v: ['0', '1000_0000', ...words, '10_0101'] },
  { name: 'busX[7:0]', net: 1, at: [500, ...every3(5000)], v: ['x*', '0', ...words, '10_01*'] },
  { name: 'busY[7:0]', net: 1, at: [500, ...every3(5000)], v: ['x*', '0', ...words, '10_01*'] },
  { name: 'err[31:0]', at: [], v: ['0'] },
  { name: 'i[31:0]', at: [3000, ...every3(6000)], v: [...bin, '*'] },
];

// Name column
const typeIcon = net => {
  let s = rect(95, 0, 27, 30, '#5c5010') + rect(95, 26, 27, 4, '#4c8468') + rect(94, 2, 29, 24, '#6c6020') + rect(96, 2, 25, 25, 'url(#gRed)');
  if (net) return s + '<path d="M101 17V9l5 8V9M115 9h7M109 9h5M109 12h4M109 16h5M109 9v8M118 9v8" fill="none" stroke="#7c4010" stroke-width="2"/>' + rect(98, 18, 20, 2, '#aff') + rect(98, 20, 20, 2, '#a05050');
  return s + '<path d="M103 4h12v16l-6 5-6-5z" fill="none" stroke="#4c8060" stroke-width="2" stroke-dasharray="3 1"/><path d="M103 12l10-7M103 17l12-9M104 20l11-8M107 22l8-6M109 24v-3" stroke="#30c8c8" stroke-width="2" stroke-dasharray="2.500 1.200"/>';
};
const verIcon = rect(55, 3, 28, 24, '#18b0a8') + rect(55, 3, 28, 7, '#20a098') +
  '<rect x="55" y="3" width="28" height="24" fill="none" stroke="#7a6c6c" stroke-width="2"/>' +
  '<text class="ver" x="56" y="23" textLength="26" lengthAdjust="spacingAndGlyphs" fill="#d02830">ver</text>';
const last = signals.length - 1;
document.getElementById('names').innerHTML =
  `<div class="group"><svg width="428" height="106">${rect(12, 78, 10, 4, '#0f0')}${rect(12, 84, 10, 4, '#0f0')}${cells('G1', 34, 90, '#0f0')}${rect(0, 96, 12, 6, '#808080')}<path d="M17 92v14" stroke="#fff" stroke-width="2" stroke-dasharray="2 2"/></svg></div>` +
  signals.map((s, i) => `<div class="row"><div class="bar"><svg width="428" height="40">
    <path d="M17 0v${i === last ? 17 : 30}M20 17h12" stroke="red" stroke-width="2" stroke-dasharray="2 2"/>
    ${i === last ? '' : '<path d="M17 30v10" stroke="#fff" stroke-width="2" stroke-dasharray="2 2"/>' + rect(0, 30, 12, 6, '#808080')}
    ${verIcon}<g>${typeIcon(s.net)}</g>${cells(s.name, 134, 24, '#000', 13.8)}</svg></div></div>`).join('') +
  `<svg class="tail" width="428" height="60" viewBox="0 0 428 60">${rect(0, 2, 418, 6, '#ff0')}${rect(0, 0, 12, 6, '#808080')}${cells('G2', 34, 32, '#0f0')}${rect(0, 38, 12, 6, '#808080')}</svg>`;

// Value column
document.getElementById('values').innerHTML = signals.map(s => {
  const v = s.net ? 'xxxx_xxxx' : '0';
  return `<svg width="126" height="40">${cells(v, 116 - v.length * CELL, 26, '#0ff')}</svg>`;
}).join('');

// Waveforms and rulers
let w = '';
const END = 2528, EDGE = '#ffe4c4';
w += rect(674, 190, 1856, 36, '#e0e0e0') + rect(676, 192, 1854, 32, '#808080');
for (let t = 500; t <= 24000; t += 500) {
  const h = t % 5000 === 0 ? 36 : t % 1000 === 0 ? 18 : 10;
  w += rect(X(t) - 1, 226 - h, 2, h, '#ff0');
}
w += rect(2508, 192, 18, 32, '#4040c0');
for (let t = 0; t < 24000; t += 5000) w += cells(t.toLocaleString('en-US'), X(t) + (t ? 2 : 3), 216, '#ff0', 13.8);

signals.forEach((s, i) => {
  const y = 296 + i * 40;
  w += rect(674, y, 1856, 32, '#606060');
  if (s.bit) {
    let px = 679, hi = false;
    for (const t of [...s.bit, null]) {
      const x = t === null ? END : X(t);
      w += rect(px - (hi ? 1 : 0), hi ? y : y + 30, x - px + (hi ? 2 : 0), 2, hi ? '#0f0' : '#0ff');
      if (t !== null) w += rect(x - 1, y, 2, 32, hi ? '#0ff' : '#0f0');
      px = x; hi = !hi;
    }
    return;
  }
  const b = [0, ...s.at].map(X);
  s.v.forEach((v, k) => {
    const a = b[k] + 1, open = k === s.v.length - 1, z = open ? END : b[k + 1] - 1;
    const c = v[0] === 'x' ? '#f00' : EDGE;
    w += rect(a, y, z - a, 2, c) + rect(a, y + 30, z - a, 2, c);
    w += rect(a, y, 2, 8, c) + rect(a, y + 22, 2, 10, c);
    if (!open) w += rect(z - 2, y, 2, 8, c) + rect(z - 2, y + 22, 2, 10, c) + rect(z, y + 8, 2, 14, EDGE);
    const width = v.length * CELL, clipped = v.length > 1 && v.endsWith('*');
    const x = v[0] === 'x' ? 678 : clipped ? a - 1 : Math.max((a + z - width) / 2 - 1.5, a - 1);
    w += cells(v, x, y + 22 + (v[0] === 'x' ? 1 : 0), '#0ff');
  });
});

w += '<g fill="none" stroke-width="2"><path d="M679 226V1494" stroke="#00f" stroke-dasharray="8 14 8 20 6 10"/><path d="M679 236V1494" stroke="#fff" stroke-dasharray="14 14 6 14"/><path d="M679 272V1494" stroke="#ff0" stroke-dasharray="5 43"/></g>' + rect(678, 190, 2, 34, '#000');

const B = t => 694 + 2 * Math.floor(t * 0.03745 + 0.4);
w += rect(674, 1498, 1856, 34, '#e0e0e0') + rect(676, 1500, 1854, 32, '#808080') + rect(694, 1500, 2, 32, '#000') + rect(694, 1498, 2, 2, '#ff0');
for (let t = 500; t <= 24000; t += 500) {
  const h = t % 5000 === 0 ? 34 : t % 1000 === 0 ? 16 : 8;
  w += rect(B(t), 1532 - h, 2, h, '#ff0');
}
w += rect(2492, 1498, 18, 32, '#4040c0');
for (let t = 0; t < 24000; t += 5000) w += cells(t.toLocaleString('en-US'), B(t) + 4, 1524, '#ff0');
document.getElementById('wave').innerHTML = w;

document.querySelectorAll('[data-w]').forEach(e => {
  const r = document.createRange();
  r.selectNodeContents(e);
  const n = e.textContent.length;
  e.style.letterSpacing = (e.dataset.w - r.getBoundingClientRect().width) / n + 'px';
});
```
